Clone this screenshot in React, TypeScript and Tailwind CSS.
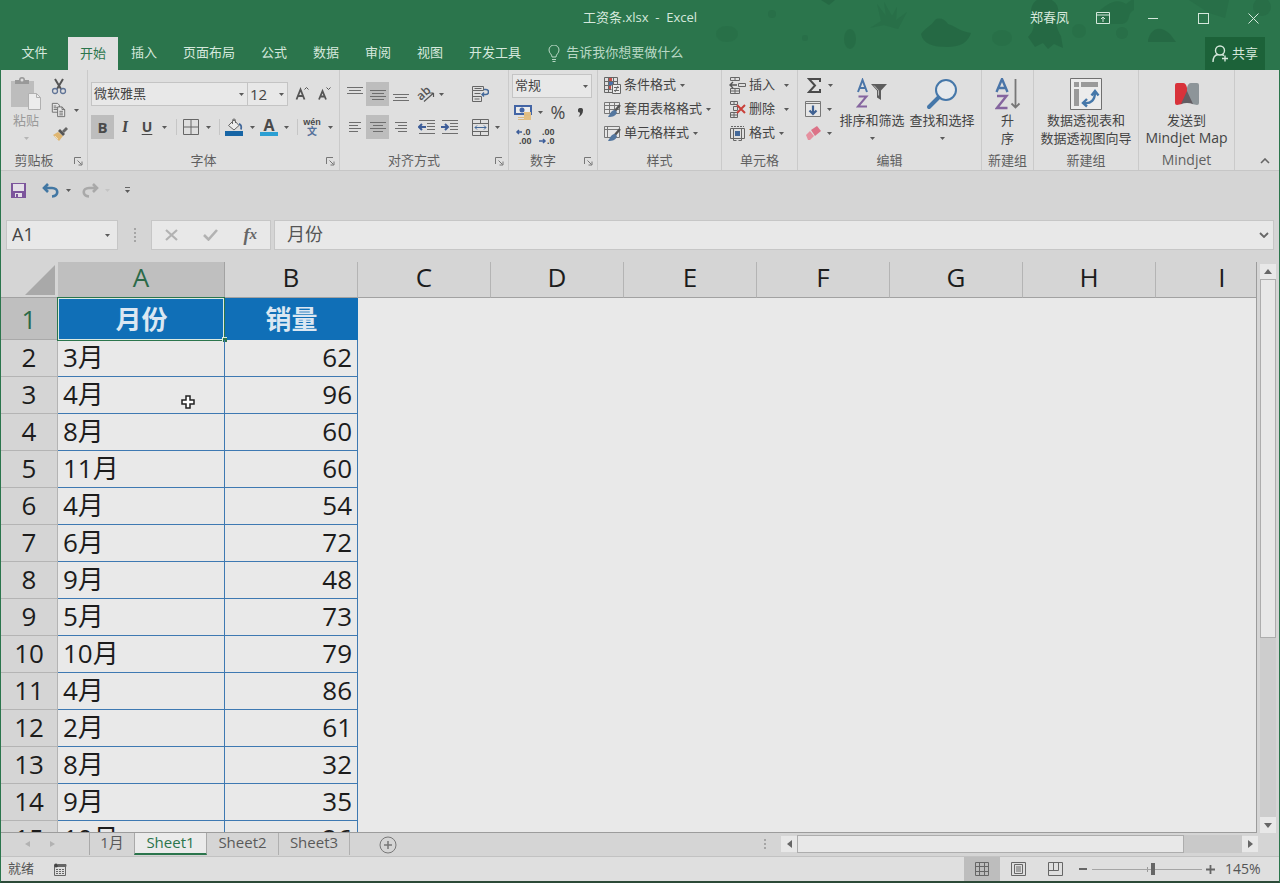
import type { ReactNode } from 'react';
import clsx from 'clsx';

const tabs = ['插入', '页面布局', '公式', '数据', '审阅', '视图', '开发工具'];

const columns = ['A', 'B', 'C', 'D', 'E', 'F', 'G', 'H', 'I'];

const rows = [
  { month: '3月', sales: 62 },
  { month: '4月', sales: 96 },
  { month: '8月', sales: 60 },
  { month: '11月', sales: 60 },
  { month: '4月', sales: 54 },
  { month: '6月', sales: 72 },
  { month: '9月', sales: 48 },
  { month: '5月', sales: 73 },
  { month: '10月', sales: 79 },
  { month: '4月', sales: 86 },
  { month: '2月', sales: 61 },
  { month: '8月', sales: 32 },
  { month: '9月', sales: 35 },
  { month: '10月', sales: 26 },
];

function Caret({ className = 'fill-[#5a5a5a]' }: { className?: string }) {
  return (
    <svg width="5" height="3" viewBox="0 0 5 3" className={clsx('shrink-0', className)}>
      <path d="M0 0h5L2.5 3z" />
    </svg>
  );
}

function Tool({ label, className, active, children }: { label: string; className?: string; active?: boolean; children: ReactNode }) {
  return (
    <button
      type="button"
      aria-label={label}
      className={clsx('flex h-6 shrink-0 items-center justify-center', active && 'bg-[#bdbdbd]', className)}
    >
      {children}
    </button>
  );
}

function Divider({ className }: { className: string }) {
  return (
    <span className={clsx('flex h-4 shrink-0 justify-center', className)}>
      <span className="w-px bg-[#c6c6c6]" />
    </span>
  );
}

function Group({ title, width, launcher, children }: { title: string; width: string; launcher?: boolean; children: ReactNode }) {
  return (
    <section className={clsx('flex h-[100px] shrink-0 flex-col border-r border-[#cacaca]', width)}>
      <div className="h-20">{children}</div>
      <div
        className={clsx(
          'relative flex h-5 items-center justify-center leading-5 text-[#5f5f5f]',
          title === 'Mindjet' ? 'text-sm' : 'text-[13px]',
          launcher && 'pr-5',
        )}
      >
        {title}
        {launcher && (
          <button type="button" aria-label={title + '设置'} className="absolute right-1 bottom-1">
            <svg width="9" height="9" viewBox="0 0 9 9" fill="none" stroke="#777">
              <path d="M.5 7V.5H7M3.5 3.5l4 4M8 4.5V8H4.5" />
            </svg>
          </button>
        )}
      </div>
    </section>
  );
}

function BigButton({ icon, width, lines, caret, disabled }: { icon: ReactNode; width: string; lines: string[]; caret?: boolean; disabled?: boolean }) {
  return (
    <button
      type="button"
      className={clsx('flex shrink-0 flex-col items-center pt-[7px] text-[13px] leading-[18px] whitespace-nowrap', width, disabled ? 'text-[#9a9a9a]' : 'text-[#444]')}
    >
      <span className="flex h-[34px] items-center">{icon}</span>
      {lines.map((line) => (
        <span key={line} className={clsx(line === 'Mindjet Map' && 'text-sm leading-[18px]')}>
          {line}
        </span>
      ))}
      {caret && (
        <span className="flex h-[18px] items-center">
          <Caret className={disabled ? 'fill-[#b5b5b5]' : 'fill-[#5a5a5a]'} />
        </span>
      )}
    </button>
  );
}

function RowButton({ icon, label, gap = 'gap-1' }: { icon: ReactNode; label: string; gap?: string }) {
  return (
    <button type="button" className="flex h-6 items-center text-[13px] whitespace-nowrap text-[#444]">
      {icon}
      <span className={clsx('ml-[3px] flex items-center', gap)}>
        {label}
        <Caret />
      </span>
    </button>
  );
}

function Picker({ label, value, options, className }: { label: string; value: string; options: string[]; className: string }) {
  return (
    <div className={clsx('relative shrink-0', className)}>
      <select
        aria-label={label}
        defaultValue={value}
        className="block h-6 w-full appearance-none border border-[#c4c4c4] bg-[#e8e8e8] pl-0.5 text-[#444]"
      >
        {options.map((option) => (
          <option key={option}>{option}</option>
        ))}
      </select>
      <span className="pointer-events-none absolute top-[11px] right-1">
        <Caret />
      </span>
    </div>
  );
}

// Text-alignment glyph: each line is [x, y, width]
function Lines({ lines }: { lines: number[][] }) {
  return (
    <svg width="16" height="16" viewBox="0 0 16 16" fill="#6e6e6e">
      {lines.map(([x, y, w]) => (
        <rect key={y} x={x} y={y} width={w} height="1" />
      ))}
    </svg>
  );
}

function PasteIcon() {
  return (
    <svg width="32" height="34" viewBox="0 0 32 34">
      <path d="M1 4h23v26H1z" fill="#bdbdbd" />
      <path d="M5 7V3h4a3 3 0 0 1 6 0h4v4z" fill="#999" />
      <circle cx="12" cy="3" r="1.5" fill="#dedede" />
      <path d="M18.500 16.500h8l4 4v12h-12z" fill="#ececec" stroke="#b0b0b0" />
      <path d="M26.500 16.500v4h4" fill="none" stroke="#b0b0b0" />
    </svg>
  );
}

function ScissorsIcon() {
  return (
    <svg width="16" height="17" viewBox="0 0 16 17" fill="none">
      <path d="M4 1l6 10M12 1L6 11" stroke="#555" strokeWidth="2" />
      <circle cx="4" cy="13" r="2.500" stroke="#5f7396" strokeWidth="1.300" />
      <circle cx="12" cy="13" r="2.500" stroke="#5f7396" strokeWidth="1.300" />
    </svg>
  );
}

function CopyIcon() {
  return (
    <svg width="17" height="16" viewBox="0 0 17 16" fill="#e6e6e6" stroke="#666">
      <path d="M1.500.5h6l2 2v8h-8z" />
      <path d="M3 3.500h3M3 5.500h4M3 7.500h4" />
      <path d="M7.500 4.500h5l3 3v8h-8z" />
      <path d="M12.500 4.500v3h3M9.500 9.500h4M9.500 11.500h4M9.500 13.500h4" fill="none" />
    </svg>
  );
}

function BrushIcon() {
  return (
    <svg width="16" height="14" viewBox="0 0 16 14">
      <path d="M1 8l5-3 5 4-4 5z" fill="#dfb672" />
      <path d="M6 4l2-2 5 5-2 2z" fill="#555" />
      <path d="M10 4l4-4 2 2-4 4z" fill="#666" />
      <path d="M3 9l3 3" stroke="#f2dfb5" />
    </svg>
  );
}

function BorderIcon() {
  return (
    <svg width="16" height="16" viewBox="0 0 16 16" fill="none" stroke="#666">
      <path d="M.5.5h15v15H.5zM8 1v14M1 8h14" />
    </svg>
  );
}

function FillIcon() {
  return (
    <svg width="18" height="18" viewBox="0 0 18 18" fill="none">
      <path d="M3.500 7.500L9 2l5 5.500L9 12z" fill="#ececec" stroke="#666" />
      <path d="M7.500 6V2.500a1.500 1.500 0 0 1 3 0V5" stroke="#666" />
      <path d="M14 6c2.500.5 2.500 3 2 5.500" stroke="#44699a" strokeWidth="1.800" />
      <path d="M0 13h18v5H0z" fill="#1765a5" />
    </svg>
  );
}

function OrientationIcon() {
  return (
    <svg width="18" height="18" viewBox="0 0 18 18" className="overflow-visible">
      <text x="0" y="12" transform="rotate(-42 7 9)" className="fill-[#555] text-xs font-semibold">
        ab
      </text>
      <path d="M7 16.500l9-8M16.500 8h-4M16.500 8v4" stroke="#555" strokeWidth="1.200" fill="none" />
    </svg>
  );
}

function WrapIcon() {
  return (
    <svg width="18" height="18" viewBox="0 0 18 18" fill="none" stroke="#666">
      <path d="M1.500 1.500h11v4h-11zM1.500 5.500v11h9v-5M1.500 11.500h9M3.500 3.500h7M3.500 8.500h6M3.500 14h5" />
      <path d="M13 4.500h2a2 2 0 0 1 0 5h-4M13 7.500l-2 2 2 2" stroke="#44699a" strokeWidth="1.400" />
    </svg>
  );
}

function IndentIcon({ inward }: { inward?: boolean }) {
  return (
    <svg width="17" height="14" viewBox="0 0 17 14" fill="none" stroke="#6e6e6e">
      <path d="M1 .5h16M9 3.500h8M9 6.500h8M9 9.500h8M1 13.500h16" />
      <path d={inward ? 'M0 7h7M4 4l3 3-3 3' : 'M8 7H1M4 4L1 7l3 3'} stroke="#3d5d99" strokeWidth="2" />
    </svg>
  );
}

function MergeIcon() {
  return (
    <svg width="17" height="17" viewBox="0 0 17 17" fill="none" stroke="#666">
      <path d="M.5.5h16v16H.5zM.5 4.500h16M.5 12.500h16M8.500.5v4M8.500 12.500v4" />
      <path d="M3 8.500h11M5 6.500l-2 2 2 2M12 6.500l2 2-2 2" stroke="#44699a" />
    </svg>
  );
}

function CurrencyIcon() {
  return (
    <svg width="18" height="17" viewBox="0 0 18 17">
      <path d="M1 2h16v8H1z" fill="#ececec" stroke="#4365a5" strokeWidth="2" />
      <circle cx="8" cy="6" r="2.500" fill="#4365a5" />
      <path d="M10 8h7v8h-7z" fill="#e3bf83" />
      <path d="M4 13.500h6M4 15.500h6M10 11h7" stroke="#dcb981" />
    </svg>
  );
}

function DecimalIcon({ increase }: { increase?: boolean }) {
  return (
    <svg width="16" height="18" viewBox="0 0 16 18" className="overflow-visible fill-[#444] font-['Liberation_Sans',sans-serif] text-[9px] font-bold">
      <text x={increase ? 7 : 3} y="8">{increase ? '.0' : '.00'}</text>
      <text x={increase ? 3 : 8} y="17">{increase ? '.00' : '.0'}</text>
      <path d={increase ? 'M6 5H1M3 3L1 5l2 2' : 'M0 14h6M4 12l2 2-2 2'} fill="none" stroke="#3d5d99" strokeWidth="1.500" />
    </svg>
  );
}

function ConditionalIcon() {
  return (
    <svg width="17" height="17" viewBox="0 0 17 17" fill="none" stroke="#666">
      <path d="M.5.5h13v15H.5zM.5 4.500h13M.5 8.500h7M.5 12.500h7M4.500.5v15M9.500.5v7" />
      <path d="M5 1h3v3H5zM5 9h2v3H5z" fill="#c8504a" stroke="none" />
      <path d="M5 5h4v3H5z" fill="#4c70a8" stroke="none" />
      <path d="M8.500 7.500h8v9h-8z" fill="#ececec" />
      <path d="M10 10.500h5M10 13.500h5M14 9l-3 6" />
    </svg>
  );
}

function TableStyleIcon({ cell }: { cell?: boolean }) {
  return (
    <svg width="17" height="17" viewBox="0 0 17 17" fill="none" stroke="#777">
      <path d="M.5 1.500h15v11H.5z" fill="#e6e6e6" />
      {cell ? <path d="M.5 4.500h15M3.500 1.500v11" /> : <path d="M.5 4.500h15M.5 8.500h15M5.500 1.500v11M10.500 1.500v11" />}
      <path d="M16 4l-6 7" stroke="#555" strokeWidth="2.400" />
      <path d="M11 9c-4 0-5 4-7 7 5 0 8-1 9-5z" fill="#54779f" stroke="none" />
    </svg>
  );
}

function InsertIcon() {
  return (
    <svg width="17" height="17" viewBox="0 0 17 17" fill="none" stroke="#666">
      <path d="M1.500.5h9v3h-9zM6 .5v3M1.500 11.500h9v5h-9zM6 11.500v5M1.500 14h9M9.500 6.500h7v3h-7z" />
      <path d="M8 8H1M4 5L1 8l3 3" stroke="#555" strokeWidth="1.400" />
    </svg>
  );
}

function DeleteIcon() {
  return (
    <svg width="17" height="17" viewBox="0 0 17 17" fill="none" stroke="#666">
      <path d="M1.500.5h7v3h-7zM5 .5v3M4.500 5.500h4v4h-4zM1.500 11.500h7v5h-7zM5 11.500v5M1.500 14h7" />
      <path d="M8 4l8 8M16 4l-8 8" stroke="#c9403a" strokeWidth="2" />
    </svg>
  );
}

function FormatIcon() {
  return (
    <svg width="17" height="17" viewBox="0 0 17 17" fill="none" stroke="#666">
      <path d="M2 1.500h13" strokeDasharray="2 1" />
      <path d="M1.500 3.500h14v10h-14zM4.500 3.500v10M12.500 3.500v10M4.500 13.500v2h3M12.500 13.500v2h-3" />
      <path d="M6 6h5v5H6z" fill="#44699a" stroke="none" />
    </svg>
  );
}

function SumIcon() {
  return (
    <svg width="14" height="15" viewBox="0 0 14 15" fill="none" stroke="#4a4a4a" strokeWidth="2">
      <path d="M13 4V1H2l6 6.500L2 14h11v-3" />
    </svg>
  );
}

function FillDownIcon() {
  return (
    <svg width="16" height="16" viewBox="0 0 16 16" fill="none">
      <path d="M.5.5h15v15H.5z" fill="#e6e6e6" stroke="#777" />
      <path d="M.5 2.500h15" stroke="#777" />
      <path d="M8 4.500V13M4.500 9.500L8 13l3.500-3.500" stroke="#3f6192" strokeWidth="2.200" />
    </svg>
  );
}

function EraserIcon() {
  return (
    <svg width="16" height="14" viewBox="0 0 16 14">
      <path d="M6 4l6-4 4 5-6 5z" fill="#dc7287" />
      <path d="M5 5l4 5-4 4H3L1 9z" fill="#e5909f" />
    </svg>
  );
}

function SortFilterIcon() {
  return (
    <svg width="32" height="32" viewBox="0 0 32 32" fill="none" strokeWidth="2">
      <path d="M2 14L6.500 2 11 14M3.500 10h6" stroke="#4a75a8" />
      <path d="M2.500 18.500h8L2 28.500h9" stroke="#85659f" />
      <path d="M15 6h16l-6 6.500V22l-4-2.500v-7z" fill="#5d5d5d" />
      <path d="M18 7.500l4.500 5v5" stroke="#bbb" strokeWidth="1" />
    </svg>
  );
}

function FindIcon() {
  return (
    <svg width="32" height="32" viewBox="0 0 32 32" fill="none" stroke="#4577a9">
      <circle cx="20" cy="12" r="10" fill="#e6e9ec" strokeWidth="2" />
      <path d="M12.500 19.500L3 29" strokeWidth="4" strokeLinecap="round" />
    </svg>
  );
}

function SortAscIcon() {
  return (
    <svg width="26" height="32" viewBox="0 0 26 32" fill="none" strokeWidth="2.400">
      <path d="M1.500 14L7 1l5.500 13M3.500 10h7" stroke="#4a75a8" />
      <path d="M2 18h9.500L2 30h10.500" stroke="#85659f" />
      <path d="M20.500 1v28M16.500 25.500l4 4 4-4" stroke="#777" strokeWidth="1.800" />
    </svg>
  );
}

function PivotIcon() {
  return (
    <svg width="32" height="32" viewBox="0 0 32 32">
      <path d="M.5.5h31v31H.5z" fill="#ececec" stroke="#707070" />
      <path d="M4 4h5v5H4zM11 4h17v5H11zM4 11h5v17H4z" fill="#9a9a9a" />
      <path d="M14 25c7 1 11-3 11-11M21.500 17.500L25 13l3.500 4.500M17 21l-4 4 4 3.500" fill="none" stroke="#4577a9" strokeWidth="2.400" />
    </svg>
  );
}

function MindjetIcon() {
  return (
    <svg width="26" height="24" viewBox="0 0 26 24">
      <path d="M1 3q0-2 2-2h6q3 0 4 5v8l-5 8-5 1q-2 0-2-2z" fill="#d8323a" />
      <path d="M25 3q0-2-2-2h-6q-3 0-4 5v8l5 8 5 1q2 0 2-2z" fill="#8d9599" />
      <path d="M13 9l6 13q-6-2-12 0z" fill="#625d62" />
    </svg>
  );
}

function TitleBar() {
  return (
    <header className="relative isolate shrink-0 bg-[#2b754c] text-[#d5e8dc]">
      <svg width="590" height="70" viewBox="0 0 590 70" className="absolute top-0 right-0 -z-10" fill="#246642" opacity=".75">
        <ellipse cx="38" cy="34" rx="11" ry="8" opacity=".4" />
        <circle cx="83" cy="14" r="4" opacity=".5" />
        <circle cx="116" cy="38" r="3" opacity=".5" />
        <path d="M132 0h14l-6 5z" />
        <ellipse cx="161" cy="39" rx="6" ry="10" opacity=".7" />
        <path d="M188 4l9 12-2-14 8 14 5-9-1 13 11-8-9 17-14-4-14 3 11-7z" opacity=".5" />
        <path d="M232 34c4-6 10-8 14-14 4-3 10-1 13 4 8 2 10 7 23 9-3 9-10 14-24 14s-24-3-26-13z" />
        <ellipse cx="313" cy="38" rx="10" ry="8" opacity=".4" />
        <path d="M342 12c0-8 5-14 13-14s16 6 14 16c-2 8-3 12 3 22l2 12-9-4-6 5-5-6-8 4-7-10c8-8 6-14 3-25z" />
        <path d="M409 12c8-7 18-15 28-8l8-6v12c-8 4-2 12-12 14h-20z" opacity=".7" />
        <circle cx="390" cy="31" r="7" opacity=".4" />
        <circle cx="433" cy="33" r="6" opacity=".5" />
        <path d="M459 40c3-12 12-15 22-6l6 8h-28z" />
        <path d="M500 0h40l-4 18-16-5z" opacity=".5" />
        <circle cx="573" cy="7" r="9" opacity=".6" />
      </svg>

      <div className="grid h-9 grid-cols-[1fr_auto_1fr] items-center text-[13px]">
        <span />
        <h1 className="whitespace-pre">工资条.xlsx  -  Excel</h1>
        <div className="flex items-center justify-end pr-px">
          <span className="mr-[9px]">郑春凤</span>
          <Tool label="功能区显示选项" className="w-[50px]">
            <svg width="14" height="12" viewBox="0 0 14 12" fill="none" stroke="currentColor">
              <path d="M.5.5h13v11H.5zM.5 3h13M7 10V5M5 7l2-2 2 2" />
            </svg>
          </Tool>
          <Tool label="最小化" className="w-[50px]">
            <span className="h-px w-[10px] bg-current" />
          </Tool>
          <Tool label="最大化" className="w-[50px]">
            <span className="size-[11px] border border-current" />
          </Tool>
          <Tool label="关闭" className="w-[50px]">
            <svg width="11" height="11" viewBox="0 0 11 11" stroke="currentColor">
              <path d="M.5.5l10 10M10.500.5l-10 10" />
            </svg>
          </Tool>
        </div>
      </div>

      <nav className="flex h-[34px] items-stretch text-[13px]">
        <button type="button" className="w-[67px]">文件</button>
        <button type="button" className="mt-px bg-[#e0e0e0] px-3 text-[#2b754c]">开始</button>
        {tabs.map((tab) => (
          <button key={tab} type="button" className="px-[13px]">
            {tab}
          </button>
        ))}
        <button type="button" className="ml-[14px] flex items-center gap-[6px] text-[#b9d8c5]">
          <svg width="12" height="17" viewBox="0 0 12 17" fill="none" stroke="currentColor">
            <path d="M4 12c0-3-3-3.500-3-7a5 5 0 0 1 10 0c0 3.500-3 4-3 7zM4 14.500h4M4.500 16.500h3" />
          </svg>
          告诉我你想要做什么
        </button>
        <button type="button" className="mt-px mr-[14px] ml-auto flex w-[60px] items-center justify-center gap-[3px] bg-[#1c6239]">
          <svg width="17" height="18" viewBox="0 0 17 18" fill="none" stroke="currentColor" strokeWidth="1.400">
            <circle cx="8" cy="5.500" r="4.500" />
            <path d="M1 17c0-4 2-7 5-7.500M10 9.500l2 1M13 10.500v6M10 13.500h6" />
          </svg>
          共享
        </button>
      </nav>
    </header>
  );
}

function Ribbon() {
  return (
    <div className="flex shrink-0 overflow-hidden border-b border-[#c6c6c6] bg-[#dfdfdf]">
      <Group title="剪贴板" width="w-[87px]" launcher>
        <div className="flex">
          <BigButton icon={<PasteIcon />} width="w-[50px]" lines={['粘贴']} caret disabled />
          <div className="flex flex-col pt-1">
            <Tool label="剪切" className="w-4"><ScissorsIcon /></Tool>
            <Tool label="复制" className="w-7 gap-2"><CopyIcon /><Caret /></Tool>
            <Tool label="格式刷" className="w-[18px]"><BrushIcon /></Tool>
          </div>
        </div>
      </Group>

      <Group title="字体" width="w-[252px]" launcher>
        <div className="pt-3 pl-[3px]">
          <div className="flex">
            <Picker label="字体" value="微软雅黑" options={['微软雅黑', '宋体', '黑体']} className="w-[157px] text-[13px]" />
            <Picker label="字号" value="12" options={['10', '11', '12', '14']} className="-ml-px w-[41px] text-[15px]" />
            <Tool label="增大字号" className="ml-[3px] w-[22px]">
              <svg width="14" height="16" viewBox="0 0 14 16" fill="none" stroke="#555">
                <path d="M1.500 13.500l4-10 4 10M3 10h5" strokeWidth="1.800" />
                <path d="M9.500 3.500l2-2 2 2" />
              </svg>
            </Tool>
            <Tool label="减小字号" className="w-[22px]">
              <svg width="14" height="16" viewBox="0 0 14 16" fill="none" stroke="#555">
                <path d="M2 13.500L5.500 5 9 13.500M3.500 10.500h4" strokeWidth="1.800" />
                <path d="M9.500 1.500l2 2 2-2" />
              </svg>
            </Tool>
          </div>
          <div className="mt-[9px] flex items-center text-[#4a4a4a]">
            <Tool label="加粗" active className="w-[23px] text-[15px] font-bold">B</Tool>
            <Tool label="倾斜" className="w-[22px] font-serif text-base font-bold italic">I</Tool>
            <Tool label="下划线" className="w-[22px] text-sm font-bold underline underline-offset-2">U</Tool>
            <Tool label="下划线选项" className="w-3"><Caret /></Tool>
            <Divider className="w-3" />
            <Tool label="边框" className="w-[18px]"><BorderIcon /></Tool>
            <Tool label="边框选项" className="w-4"><Caret /></Tool>
            <Divider className="w-[6px]" />
            <Tool label="填充颜色" className="w-[24px]"><FillIcon /></Tool>
            <Tool label="填充颜色选项" className="w-3"><Caret /></Tool>
            <Tool label="字体颜色" className="w-[22px]">
              <span className="flex h-[18px] w-[18px] items-center justify-center border-b-4 border-[#2b9fd3] text-base leading-none font-bold">A</span>
            </Tool>
            <Tool label="字体颜色选项" className="w-3"><Caret /></Tool>
            <Divider className="w-[10px]" />
            <Tool label="拼音" className="w-5 flex-col font-['Liberation_Sans','Noto_Sans_CJK_SC',sans-serif] text-[9px] leading-[8px] font-bold">
              <span>wén</span>
              <span className="text-[10px] leading-[11px] text-[#54719b]">文</span>
            </Tool>
            <Tool label="拼音选项" className="w-4"><Caret /></Tool>
          </div>
        </div>
      </Group>

      <Group title="对齐方式" width="w-[169px]" launcher>
        <div className="pt-3 pl-[3px]">
          <div className="flex">
            <Tool label="顶端对齐" className="w-[23px]"><Lines lines={[[0, 1, 16], [2, 4, 12], [0, 7, 16]]} /></Tool>
            <Tool label="垂直居中" active className="w-[23px]"><Lines lines={[[0, 4, 16], [2, 7, 12], [0, 10, 16], [2, 13, 12]]} /></Tool>
            <Tool label="底端对齐" className="w-[23px]"><Lines lines={[[0, 8, 16], [2, 11, 12], [0, 14, 16]]} /></Tool>
            <Tool label="方向" className="ml-1 w-5"><OrientationIcon /></Tool>
            <Tool label="方向选项" className="w-[10px]"><Caret /></Tool>
            <Tool label="自动换行" className="ml-6 w-5"><WrapIcon /></Tool>
          </div>
          <div className="mt-[9px] flex">
            <Tool label="左对齐" className="w-[23px]"><Lines lines={[[2, 3, 12], [2, 6, 9], [2, 9, 12], [2, 12, 9]]} /></Tool>
            <Tool label="居中" active className="w-[23px]"><Lines lines={[[0, 3, 16], [3, 6, 10], [0, 9, 16], [3, 12, 10]]} /></Tool>
            <Tool label="右对齐" className="w-[23px]"><Lines lines={[[2, 3, 12], [5, 6, 9], [2, 9, 12], [5, 12, 9]]} /></Tool>
            <Tool label="减少缩进量" className="ml-[3px] w-[23px]"><IndentIcon /></Tool>
            <Tool label="增加缩进量" className="w-[23px]"><IndentIcon inward /></Tool>
            <Tool label="合并后居中" className="ml-[9px] w-5"><MergeIcon /></Tool>
            <Tool label="合并选项" className="w-[14px]"><Caret /></Tool>
          </div>
        </div>
      </Group>

      <Group title="数字" width="w-[89px]" launcher>
        <div className="pt-1 pl-[3px]">
          <Picker label="数字格式" value="常规" options={['常规', '数值', '货币', '百分比']} className="w-[80px] text-[13px]" />
          <div className="flex h-7 items-center text-[#4a4a4a]">
            <Tool label="会计数字格式" className="w-[22px]"><CurrencyIcon /></Tool>
            <Tool label="会计格式选项" className="w-3"><Caret /></Tool>
            <Tool label="百分比样式" className="w-6 text-lg">%</Tool>
            <Tool label="千位分隔样式" className="w-5">
              <svg width="5" height="9" viewBox="0 0 5 9" fill="#444">
                <path d="M2.500 0a2.300 2.300 0 0 1 2.500 2.500C5 5.500 3 8 .5 9c1-1.500 1.500-2.500 1.500-4.200A2.400 2.400 0 0 1 2.500 0z" />
              </svg>
            </Tool>
          </div>
          <div className="flex h-5 items-center">
            <Tool label="增加小数位数" className="w-6"><DecimalIcon increase /></Tool>
            <Tool label="减少小数位数" className="w-[22px]"><DecimalIcon /></Tool>
          </div>
        </div>
      </Group>

      <Group title="样式" width="w-[124px]">
        <div className="flex flex-col items-start pt-[3px] pl-[6px]">
          <RowButton icon={<ConditionalIcon />} label="条件格式" />
          <RowButton icon={<TableStyleIcon />} label="套用表格格式" />
          <RowButton icon={<TableStyleIcon cell />} label="单元格样式" />
        </div>
      </Group>

      <Group title="单元格" width="w-[76px]">
        <div className="flex flex-col items-start pt-[3px] pl-[7px]">
          <RowButton icon={<InsertIcon />} label="插入" gap="gap-[9px]" />
          <RowButton icon={<DeleteIcon />} label="删除" gap="gap-[9px]" />
          <RowButton icon={<FormatIcon />} label="格式" />
        </div>
      </Group>

      <Group title="编辑" width="w-[184px]">
        <div className="flex">
          <div className="flex flex-col pt-[3px] pl-[6px]">
            <Tool label="自动求和" className="gap-[7px] pl-[3px]"><SumIcon /><Caret /></Tool>
            <Tool label="填充" className="gap-[6px]"><FillDownIcon /><Caret /></Tool>
            <Tool label="清除" className="gap-[6px]"><EraserIcon /><Caret /></Tool>
          </div>
          <BigButton icon={<SortFilterIcon />} width="ml-1 w-[70px]" lines={['排序和筛选']} caret />
          <BigButton icon={<FindIcon />} width="w-[70px]" lines={['查找和选择']} caret />
        </div>
      </Group>

      <Group title="新建组" width="w-[52px]">
        <BigButton icon={<SortAscIcon />} width="w-full" lines={['升', '序']} />
      </Group>

      <Group title="新建组" width="w-[105px]">
        <BigButton icon={<PivotIcon />} width="w-full" lines={['数据透视表和', '数据透视图向导']} />
      </Group>

      <Group title="Mindjet" width="w-[96px]">
        <BigButton icon={<MindjetIcon />} width="w-full" lines={['发送到', 'Mindjet Map']} />
      </Group>

      <button type="button" aria-label="折叠功能区" className="mr-[9px] mb-[6px] ml-auto self-end">
        <svg width="10" height="6" viewBox="0 0 10 6" fill="none" stroke="#666" strokeWidth="1.600">
          <path d="M1 5l4-4 4 4" />
        </svg>
      </button>
    </div>
  );
}

function QuickAccess() {
  return (
    <div className="flex h-[38px] shrink-0 items-center pl-2">
      <Tool label="保存" className="w-[18px]">
        <svg width="15" height="15" viewBox="0 0 15 15">
          <path d="M0 0h15v15H0z" fill="#7c559c" />
          <path d="M2 1h11v7H2zM4 10h7v4H4z" fill="#e4dfe8" />
          <path d="M5 11h2v3H5z" fill="#7c559c" />
        </svg>
      </Tool>
      <Tool label="撤消" className="ml-[14px] w-[18px]">
        <svg width="17" height="15" viewBox="0 0 17 15" fill="none" stroke="#4277a3" strokeWidth="2.600">
          <path d="M6 1L2 5l4 4M2 5h8c7 0 7 8 0 8.500" />
        </svg>
      </Tool>
      <Tool label="撤消选项" className="w-[18px]"><Caret /></Tool>
      <Tool label="恢复" className="ml-1 w-[18px]">
        <svg width="17" height="15" viewBox="0 0 17 15" fill="none" stroke="#a9a9a9" strokeWidth="2.600">
          <path d="M11 1l4 4-4 4M15 5H7c-7 0-7 8 0 8.500" />
        </svg>
      </Tool>
      <Tool label="恢复选项" className="w-4"><Caret className="fill-[#c4c4c4]" /></Tool>
      <Tool label="自定义快速访问工具栏" className="ml-1 w-4 flex-col gap-0.5">
        <span className="h-px w-[5px] bg-[#666]" />
        <Caret />
      </Tool>
    </div>
  );
}

function FormulaBar() {
  return (
    <div className="mt-[11px] flex h-[30px] shrink-0 items-stretch pr-[5px] pl-[5px]">
      <div className="flex w-[112px] items-center border border-[#c6c6c6] bg-[#e8e8e8] pr-[7px] pl-[5px]">
        <input aria-label="名称框" defaultValue="A1" className="h-7 w-full min-w-0 pb-0.5 text-lg text-[#444] outline-none" />
        <Caret />
      </div>
      <span className="flex w-[33px] flex-col items-center justify-center gap-[2px]">
        {[0, 1, 2, 3].map((dot) => (
          <span key={dot} className="size-[2px] bg-[#a5a5a5]" />
        ))}
      </span>
      <div className="flex w-[120px] items-center justify-around border border-[#c6c6c6] bg-[#e8e8e8]">
        <Tool label="取消" className="w-6">
          <svg width="13" height="12" viewBox="0 0 13 12" stroke="#b2b2b2" strokeWidth="2.200">
            <path d="M1 1l11 10M12 1L1 11" />
          </svg>
        </Tool>
        <Tool label="输入" className="w-6">
          <svg width="15" height="12" viewBox="0 0 15 12" fill="none" stroke="#b2b2b2" strokeWidth="2.600">
            <path d="M1 6l4.500 4.500L14 1" />
          </svg>
        </Tool>
        <Tool label="插入函数" className="w-6 font-['Liberation_Serif',serif] text-lg font-bold text-[#666] italic">
          f<span className="text-[15px]">x</span>
        </Tool>
      </div>
      <div className="ml-[3px] flex min-w-0 flex-1 items-center border border-[#c6c6c6] bg-[#e8e8e8] pr-1 pl-3">
        <input aria-label="编辑栏" defaultValue="月份" className="h-7 w-full min-w-0 pb-0.5 text-lg text-[#555] outline-none" />
        <button type="button" aria-label="展开编辑栏">
          <svg width="10" height="6" viewBox="0 0 10 6" fill="none" stroke="#666" strokeWidth="1.800">
            <path d="M1 1l4 4 4-4" />
          </svg>
        </button>
      </div>
    </div>
  );
}

function Sheet() {
  return (
    <div className="min-w-0 flex-1 overflow-hidden border-r border-b border-[#9c9c9c] bg-[#e9e9e9]">
      <table className="w-[1288px] table-fixed border-separate border-spacing-0 text-[26px] leading-[34px] text-[#1c1c1c]">
        <colgroup>
          <col className="w-[57px]" />
          <col className="w-[167px]" />
          {columns.slice(1).map((column) => (
            <col key={column} className="w-[133px]" />
          ))}
        </colgroup>
        <thead>
          <tr className="h-9">
            <th className="h-9 border-b border-[#a2a2a2] bg-[#d5d5d5] p-0">
              <svg width="30" height="30" viewBox="0 0 30 30" className="ml-6" fill="#a9a9a9">
                <path d="M30 0v30H0z" />
              </svg>
            </th>
            {columns.map((column) => (
              <th
                key={column}
                scope="col"
                className={clsx(
                  'h-9 border-r border-b px-0 pt-0 pb-1 leading-[31px] font-normal',
                  column === 'A' ? 'border-[#a2a2a2] bg-[#bfbfbf] text-[#2b6a49]' : 'border-r-[#b4b4b4] border-b-[#a2a2a2] bg-[#d5d5d5]',
                )}
              >
                {column}
              </th>
            ))}
          </tr>
        </thead>
        <tbody>
          <tr>
            <th scope="row" className="h-[42px] border-r border-b border-[#a9a9a9] bg-[#bfbfbf] p-0 font-normal text-[#2b6a49]">1</th>
            <td className="relative bg-[#106fb7] p-0 text-center font-bold text-[#dbe7f2]">
              月份
              <span className="absolute -top-px right-0 -bottom-px -left-px border border-[#2b754c]">
                <span className="absolute inset-0 border border-[#dcebe2]" />
              </span>
              <span className="absolute -right-[2px] -bottom-[2px] size-[5px] border-t border-l border-[#dcebe2] bg-[#2b754c]" />
            </td>
            <td className="bg-[#106fb7] p-0 text-center font-bold text-[#dbe7f2]">销量</td>
            <td colSpan={7} />
          </tr>
          {rows.map((row, index) => (
            <tr key={index}>
              <th scope="row" className="h-[37px] border-r border-b border-[#b4b4b4] bg-[#d5d5d5] px-0 pt-0 pb-0.5 font-normal">{index + 2}</th>
              <td className="relative border-r border-b border-[#3e79b2] pt-0 pr-0 pb-0.5 pl-[5px]">
                {row.month}
                {index === 1 && (
                  <svg width="14" height="14" viewBox="0 0 14 14" className="absolute top-[18px] left-[123px]">
                    <path d="M5 1h4v4h4v4H9v4H5V9H1V5h4z" fill="#fff" stroke="#222" strokeWidth="1.500" />
                  </svg>
                )}
              </td>
              <td className="border-r border-b border-[#3e79b2] pt-0 pr-[5px] pb-0.5 pl-0 text-right">{row.sales}</td>
              <td colSpan={7} />
            </tr>
          ))}
        </tbody>
      </table>
    </div>
  );
}

function VerticalScroll() {
  return (
    <div className="flex w-[22px] shrink-0 flex-col items-center pt-[2px] pr-px">
      <button type="button" aria-label="向上滚动" className="flex h-[15px] w-4 items-center justify-center bg-[#e8e8e8]">
        <svg width="8" height="5" viewBox="0 0 8 5" fill="#666"><path d="M0 5l4-5 4 5z" /></svg>
      </button>
      <div className="flex w-4 flex-1 flex-col bg-[#cdcdcd]">
        <div className="h-2/3 border border-[#adadad] bg-[#e8e8e8]" />
      </div>
      <button type="button" aria-label="向下滚动" className="flex h-4 w-4 items-center justify-center bg-[#e8e8e8]">
        <svg width="8" height="5" viewBox="0 0 8 5" fill="#666"><path d="M0 0h8L4 5z" /></svg>
      </button>
    </div>
  );
}

function SheetTabs() {
  return (
    <div className="flex h-[23px] shrink-0 items-start text-[15px] leading-[18px] text-[#5a5a5a]">
      <div className="flex h-[22px] w-[89px] items-center gap-5 border-r border-[#a9a9a9] pl-6">
        <button type="button" aria-label="上一张工作表">
          <svg width="5" height="6" viewBox="0 0 5 6" fill="#b2b2b2"><path d="M5 0v6L0 3z" /></svg>
        </button>
        <button type="button" aria-label="下一张工作表">
          <svg width="5" height="6" viewBox="0 0 5 6" fill="#b2b2b2"><path d="M0 0v6l5-3z" /></svg>
        </button>
      </div>
      <button type="button" className="h-[22px] w-11 pb-[6px]">1月</button>
      <button type="button" className="h-[22px] w-[73px] border-x border-b-2 border-x-[#a9a9a9] border-b-[#2b754c] bg-[#ebebeb] pb-1 text-[#2b754c]">Sheet1</button>
      <button type="button" className="h-[22px] w-[72px] border-r border-[#b0b0b0] pb-[6px]">Sheet2</button>
      <button type="button" className="h-[22px] w-[71px] border-r border-[#b0b0b0] pb-[6px]">Sheet3</button>
      <button type="button" aria-label="新工作表" className="mt-[3px] ml-[29px]">
        <svg width="18" height="18" viewBox="0 0 18 18" fill="none" stroke="#777">
          <circle cx="9" cy="9" r="8" />
          <path d="M9 5v8M5 9h8" strokeWidth="1.500" />
        </svg>
      </button>
      <div className="mt-[3px] mr-[21px] ml-auto flex h-4 w-[494px] items-center">
        <span className="mr-3 flex w-[5px] flex-col gap-[2px]">
          {[0, 1, 2].map((dot) => (
            <span key={dot} className="size-[2px] bg-[#a5a5a5]" />
          ))}
        </span>
        <button type="button" aria-label="向左滚动" className="flex h-4 w-4 items-center justify-center bg-[#e8e8e8]">
          <svg width="5" height="8" viewBox="0 0 5 8" fill="#666"><path d="M5 0v8L0 4z" /></svg>
        </button>
        <div className="h-[18px] flex-1 bg-[#c9c9c9]">
          <div className="h-full w-[87%] border border-[#adadad] bg-[#e8e8e8]" />
        </div>
        <button type="button" aria-label="向右滚动" className="flex h-4 w-4 items-center justify-center bg-[#e8e8e8]">
          <svg width="5" height="8" viewBox="0 0 5 8" fill="#666"><path d="M0 0v8l5-4z" /></svg>
        </button>
      </div>
    </div>
  );
}

function StatusBar() {
  return (
    <footer className="flex h-[25px] shrink-0 items-center border-t border-[#c2c2c2] bg-[#dfdfdf] pl-[7px] text-[13px] text-[#555]">
      <span>就绪</span>
      <button type="button" aria-label="录制宏" className="ml-[19px]">
        <svg width="14" height="13" viewBox="0 0 14 13" fill="none" stroke="#666">
          <path d="M1.500 3.500h11v9h-11z" />
          <path d="M5 1.500h8v2H5z" fill="#666" />
          <circle cx="3" cy="2.500" r="2" fill="#444" stroke="none" />
          <path d="M3 6.500h8M3 8.500h8M3 10.500h8" strokeDasharray="2 1" />
        </svg>
      </button>
      <div className="ml-auto flex items-center self-stretch">
        <Tool label="普通" active className="w-9">
          <svg width="14" height="14" viewBox="0 0 14 14" fill="none" stroke="#666">
            <path d="M.5.5h13v13H.5zM4.500 0v14M9.500 0v14M0 4.500h14M0 9.500h14" />
          </svg>
        </Tool>
        <Tool label="页面布局视图" className="w-[37px]">
          <svg width="15" height="14" viewBox="0 0 15 14" fill="none" stroke="#666">
            <path d="M.5.5h14v13H.5zM3.500 2.500h8v9h-8zM5 5h5M5 7h5M5 9h5" />
          </svg>
        </Tool>
        <Tool label="分页预览" className="w-[37px]">
          <svg width="15" height="14" viewBox="0 0 15 14" fill="none" stroke="#666">
            <path d="M.5.5h14v13H.5zM5.500.5v8M10.500.5v8M0 8.500h10.500" />
          </svg>
        </Tool>
        <Tool label="缩小" className="w-[18px]"><span className="h-0.5 w-2 bg-[#666]" /></Tool>
        <div className="relative flex h-full w-[110px] items-center">
          <span className="absolute left-1/2 h-[5px] w-px bg-[#999]" />
          <input
            type="range"
            aria-label="缩放"
            min={0}
            max={100}
            defaultValue={56}
            className="relative h-px w-full appearance-none bg-[#a5a5a5] [&::-webkit-slider-thumb]:h-3 [&::-webkit-slider-thumb]:w-1 [&::-webkit-slider-thumb]:appearance-none [&::-webkit-slider-thumb]:bg-[#666]"
          />
        </div>
        <Tool label="放大" className="w-4">
          <svg width="9" height="9" viewBox="0 0 9 9" stroke="#666" strokeWidth="1.800"><path d="M4.500 0v9M0 4.500h9" /></svg>
        </Tool>
        <span className="w-[61px] pl-[7px] text-sm">145%</span>
      </div>
    </footer>
  );
}

export default function App() {
  return (
    <div className="flex h-screen flex-col overflow-hidden border-x border-b-2 border-x-[#2b754c] border-b-[#2c4a38] bg-[#d5d5d5] font-['Open_Sans','Noto_Sans_CJK_SC',sans-serif]">
      <TitleBar />
      <Ribbon />
      <QuickAccess />
      <FormulaBar />
      <main className="mt-3 flex min-h-0 flex-1">
        <Sheet />
        <VerticalScroll />
      </main>
      <SheetTabs />
      <StatusBar />
    </div>
  );
}
